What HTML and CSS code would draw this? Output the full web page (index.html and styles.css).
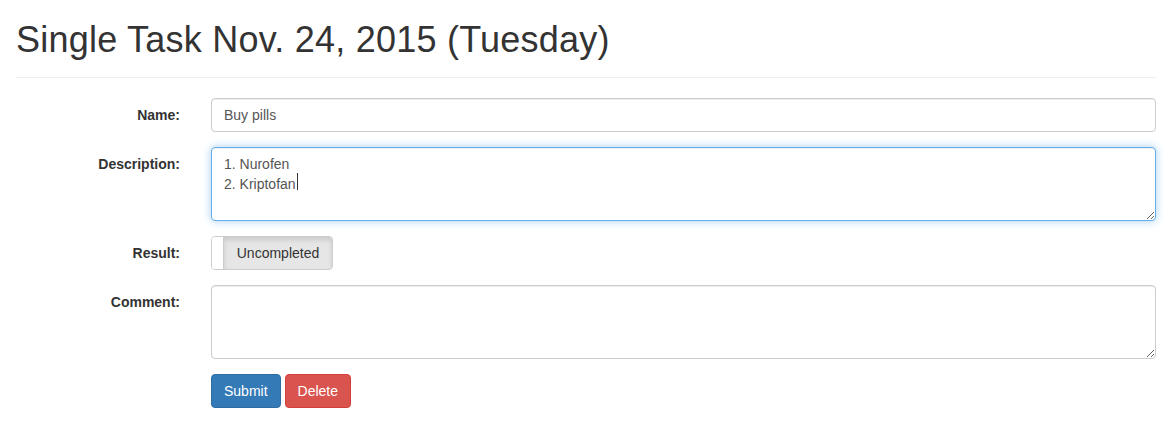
FILE: index.html
```html
<!DOCTYPE html>
<html>
<head>
<meta charset="utf-8">
<link rel="stylesheet" href="styles.css">
<title>Single Task</title>
</head>
<body>
<div class="container">
  <div class="page-header">
    <h1>Single Task Nov. 24, 2015 (Tuesday)</h1>
  </div>
  <form class="form">
    <div class="form-group">
      <label class="control-label">Name:</label>
      <div class="control">
        <input class="form-control" type="text" value="Buy pills">
      </div>
    </div>
    <div class="form-group">
      <label class="control-label">Description:</label>
      <div class="control caret-wrap">
        <textarea class="form-control focused" rows="3">1. Nurofen
2. Kriptofan</textarea>
        <span class="caret-line"></span>
      </div>
    </div>
    <div class="form-group">
      <label class="control-label">Result:</label>
      <div class="control">
        <div class="toggle">
          <span class="toggle-handle"></span>
          <span class="toggle-off">Uncompleted</span>
        </div>
      </div>
    </div>
    <div class="form-group">
      <label class="control-label">Comment:</label>
      <div class="control">
        <textarea class="form-control" rows="3"></textarea>
      </div>
    </div>
    <div class="form-group">
      <div class="control-label"></div>
      <div class="control buttons">
        <button type="button" class="btn btn-primary">Submit</button>
        <button type="button" class="btn btn-danger">Delete</button>
      </div>
    </div>
  </form>
</div>
</body>
</html>
```

FILE: styles.css
```css
* { box-sizing: border-box; }
html, body {
  margin: 0;
  padding: 0;
  background: #fff;
}
body {
  font-family: "Liberation Sans", Arial, Helvetica, sans-serif;
  font-size: 14px;
  line-height: 20px;
  color: #333;
}
.container {
  padding: 0 12px 0 16px;
}
.page-header {
  border-bottom: 1px solid #eee;
  padding-bottom: 7px;
  margin: 0 0 20px 0;
}
.page-header h1 {
  margin: 20px 0 10px 0;
  font-size: 36px;
  font-weight: 500;
  line-height: 39.6px;
  letter-spacing: 0.23px;
  color: #333;
}
.form-group {
  display: flex;
  gap: 31px;
  margin-bottom: 15px;
}
.control-label {
  width: 164px;
  flex: none;
  text-align: right;
  font-weight: bold;
  padding-top: 7px;
  line-height: 20px;
}
.control {
  flex: 1;
  min-width: 0;
}
.caret-wrap {
  position: relative;
}
.form-control {
  display: block;
  width: 100%;
  height: 34px;
  padding: 6px 12px;
  font-family: inherit;
  font-size: 14px;
  line-height: 20px;
  color: #555;
  background: #fff;
  border: 1px solid #ccc;
  border-radius: 4px;
  box-shadow: inset 0 1px 1px rgba(0,0,0,.075);
  outline: none;
  margin: 0;
}
textarea.form-control {
  height: 74px;
  resize: vertical;
}
.form-control.focused {
  border-color: #66afe9;
  box-shadow: inset 0 1px 1px rgba(0,0,0,.075), 0 0 8px rgba(102,175,233,.6);
}
.caret-line {
  position: absolute;
  left: 86px;
  top: 26px;
  width: 1px;
  height: 17px;
  background: #333;
}
.toggle {
  display: flex;
  height: 34px;
  width: 122px;
  border: 1px solid #ccc;
  border-radius: 4px;
  overflow: hidden;
}
.toggle-handle {
  width: 12px;
  flex: none;
  background: #fff;
  border-right: 1px solid #ccc;
}
.toggle-off {
  flex: 1;
  background: #e6e6e6;
  box-shadow: inset 0 3px 5px rgba(0,0,0,.125);
  color: #333;
  text-align: center;
  line-height: 32px;
  font-size: 14px;
}
.buttons {
  display: flex;
  gap: 4px;
}
.btn {
  display: inline-block;
  height: 34px;
  padding: 6px 12px;
  font-family: inherit;
  font-size: 14px;
  line-height: 20px;
  border: 1px solid transparent;
  border-radius: 4px;
  color: #fff;
  margin: 0;
}
.btn-primary {
  background: #337ab7;
  border-color: #2e6da4;
}
.btn-danger {
  background: #d9534f;
  border-color: #d43f3a;
}
```
